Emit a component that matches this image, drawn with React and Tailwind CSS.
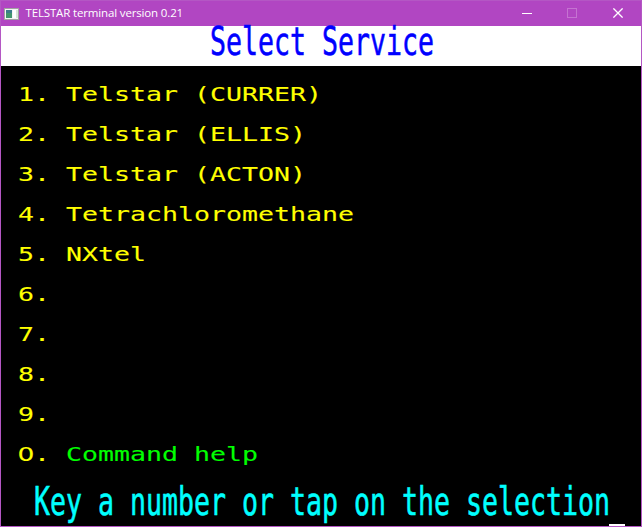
const services = [
  { key: "1", label: "Telstar (CURRER)" },
  { key: "2", label: "Telstar (ELLIS)" },
  { key: "3", label: "Telstar (ACTON)" },
  { key: "4", label: "Tetrachloromethane" },
  { key: "5", label: "NXtel" },
  { key: "6", label: "" },
  { key: "7", label: "" },
  { key: "8", label: "" },
  { key: "9", label: "" },
];

// Teletext cells are 16px wide and 20px tall; double-height text fills two rows.
function Cells({ children, double = false }) {
  return (
    <span
      className={`block w-max origin-top-left translate-x-px whitespace-pre text-[20px] leading-[15px] ${
        double
          ? "translate-y-[1.5px] scale-x-[1.3288] scale-y-[1.96] [-webkit-text-stroke:0.3px]"
          : "translate-y-[1.2px] scale-x-[1.3288] scale-y-[1.01] [-webkit-text-stroke:0.1px]"
      }`}
    >
      {children}
    </span>
  );
}

function Row({ children }) {
  return <li className="h-10 pt-5 pl-4">{children}</li>;
}

function TitleBar() {
  return (
    <header className="flex h-[25px] shrink-0 items-center bg-[#b146c2] text-white">
      <svg className="ml-[3px] h-3 w-[15px]" viewBox="0 0 15 12" shapeRendering="crispEdges">
        <rect width="15" height="12" fill="#a2a2a2" />
        <rect x="1" y="1" width="13" height="10" fill="#f4f4f4" />
        <rect x="2" y="2" width="6" height="8" fill="#3b7d8c" />
        <rect x="2" y="5" width="6" height="5" fill="#41966d" />
        <rect x="9" y="2" width="3" height="8" fill="#ffffff" />
        <rect x="12" y="2" width="2" height="8" fill="#d8e5da" />
      </svg>
      <h1 className="ml-[6.5px] grow -translate-y-px whitespace-nowrap font-['Open_Sans',sans-serif] text-[11.5px] leading-4 tracking-[-0.15px]">
        TELSTAR terminal version 0.21
      </h1>
      <div className="flex h-full items-center">
        <button className="grid h-full w-[45px] place-items-center" aria-label="Minimize">
          <svg className="-translate-y-px" width="10" height="10" viewBox="0 0 10 10" shapeRendering="crispEdges">
            <rect y="5" width="10" height="1" fill="#fff" />
          </svg>
        </button>
        <button className="grid h-full w-[45px] place-items-center" aria-label="Maximize">
          <svg className="-translate-y-px" width="10" height="10" viewBox="0 0 10 10" shapeRendering="crispEdges">
            <rect x="0.5" y="0.5" width="9" height="9" fill="none" stroke="#c573d1" />
          </svg>
        </button>
        <button className="grid h-full w-[47px] place-items-center" aria-label="Close">
          <svg className="-translate-y-px" width="10" height="10" viewBox="0 0 10 10">
            <path d="M0.4 0.4 9.6 9.6M9.6 0.4 0.4 9.6" stroke="#fff" strokeWidth="1.3" />
          </svg>
        </button>
      </div>
    </header>
  );
}

export default function App() {
  return (
    <div className="flex h-[527px] w-[642px] flex-col overflow-hidden border border-[#b457c4] bg-black">
      <TitleBar />
      <main className="flex grow flex-col font-['DejaVu_Sans_Mono',monospace] text-[#ffff00]">
        <h2 className="h-10 bg-white pl-[208px] text-[#0000ff]">
          <Cells double>Select Service</Cells>
        </h2>
        <ul>
          {services.map((s) => (
            <Row key={s.key}>
              <Cells>{`${s.key}. ${s.label}`}</Cells>
            </Row>
          ))}
          <Row>
            <Cells>
              <span className="inline-block w-[12.04px] text-center font-['DejaVu_Sans',sans-serif]">
                <span className="-mx-1">0</span>
              </span>
              {". "}
              <span className="text-[#00ff00]">Command help</span>
            </Cells>
          </Row>
        </ul>
        <footer className="relative mt-5 h-10 pl-8 text-[#00ffff]">
          <Cells double>Key a number or tap on the selection</Cells>
          <span className="absolute bottom-0 left-[608px] h-0.5 w-4 bg-white" />
        </footer>
      </main>
    </div>
  );
}
